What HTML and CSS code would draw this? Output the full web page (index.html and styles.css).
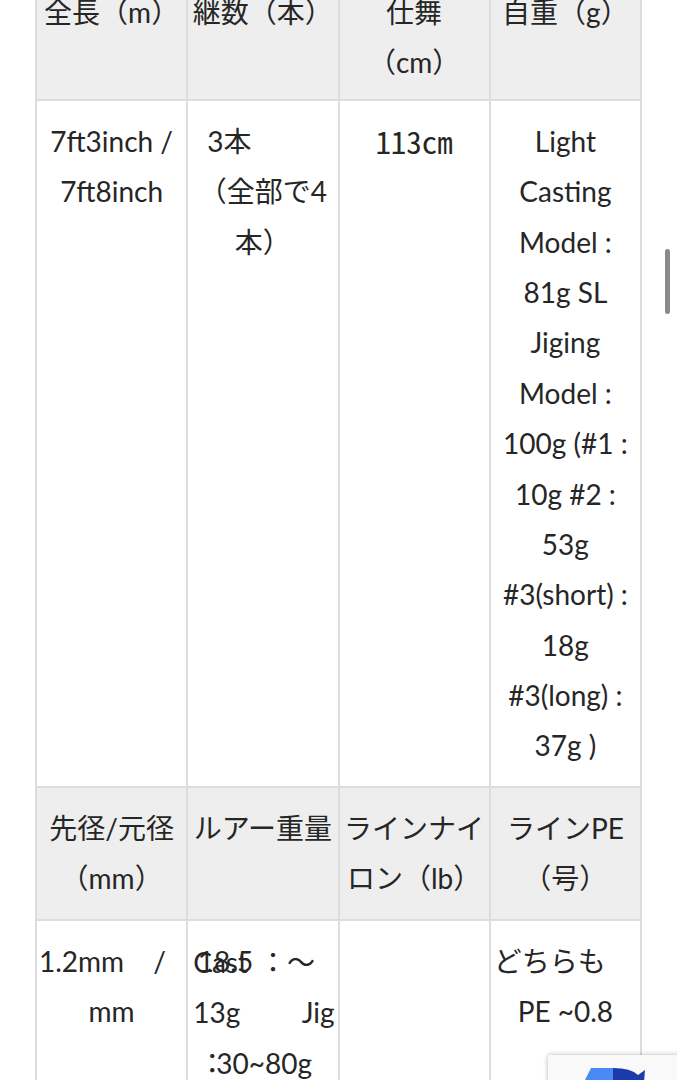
FILE: index.html
```html
<!DOCTYPE html>
<html lang="ja">
<head>
<meta charset="utf-8">
<title>Spec</title>
<link rel="stylesheet" href="styles.css">
</head>
<body>
<main class="page">
  <table class="spec">
    <colgroup><col><col><col><col></colgroup>
    <tr class="head head-top">
      <th>全長（m）</th>
      <th>継数（本）</th>
      <th>仕舞<br>（cm）</th>
      <th>自重（g）</th>
    </tr>
    <tr>
      <td>7ft3inch /<br>7ft8inch</td>
      <td><span class="ln ln-indent">3本</span>（全部で4<br>本）</td>
      <td><span class="mono">113cm</span></td>
      <td>Light<br>Casting<br>Model :<br>81g SL<br>Jiging<br>Model :<br>100g (#1 :<br>10g #2 :<br>53g<br>#3(short) :<br>18g<br>#3(long) :<br>37g )</td>
    </tr>
    <tr class="head">
      <th>先径/元径<br>（mm）</th>
      <th>ルアー重量</th>
      <th><span class="ln">ラインナイ</span><span class="ln">ロン（lb）</span></th>
      <th>ラインPE<br>（号）</th>
    </tr>
    <tr>
      <td>
        <span class="ln ln-over"><span>1.2mm</span><span class="sep">/</span><span class="spill">18.5</span></span>
        <span class="ln">mm</span>
      </td>
      <td>
        <span class="ln ln-left">Cast<span class="colon">：～</span></span>
        <span class="ln ln-just"><span>13g</span><span>Jig</span></span>
        <span class="ln ln-left ln-last"><span class="tight">：</span>30~80g</span>
      </td>
      <td></td>
      <td>
        <span class="ln ln-start">どちらも</span>
        <span class="ln">PE ~0.8</span>
      </td>
    </tr>
  </table>
</main>
<div class="scrollbar"></div>
<div class="badge">
  <svg class="badge-logo" width="80" height="30" viewBox="0 0 80 30">
    <path d="M3 18 L10 4 L32 4 L32 18 Z" fill="#4a8af4"/>
    <path d="M32 4 Q50 4 57 11 L64 6 L63 18 L32 18 Z" fill="#1c3aa9"/>
  </svg>
</div>
</body>
</html>
```

FILE: styles.css
```css
html, body {
  margin: 0;
  padding: 0;
  background: #ffffff;
}

body {
  font-family: "Lato", "Noto Sans CJK JP", sans-serif;
  font-size: 28px;
  line-height: 1.8;
  color: #262626;
  overflow: hidden;
}

.page {
  padding-left: 35px;
  margin-top: -34px;
}

.spec {
  border-collapse: collapse;
  table-layout: fixed;
  width: 607px;
}

.spec th,
.spec td {
  border: 2px solid #dddddd;
  padding: 15px 3px;
  vertical-align: top;
  text-align: center;
  font-weight: normal;
}

.spec .head th {
  background: #eeeeee;
}

.spec .head-top th {
  padding-top: 19px;
  padding-bottom: 11px;
}

.mono {
  font-family: "Noto Sans Mono CJK JP", "DejaVu Sans Mono", monospace;
  font-size: 31px;
  line-height: 50px;
}

.ln {
  display: block;
  white-space: nowrap;
}

.ln-indent {
  text-align: left;
  padding-left: 16px;
}

.ln-over {
  display: flex;
  margin-left: -1px;
}

.ln-over .sep {
  margin-left: 29px;
}

.ln-over .spill {
  margin-left: 32px;
}

.ln-left {
  text-align: left;
  padding-left: 2px;
}

.ln-last {
  padding-left: 7px;
}

.ln-left .colon {
  margin-left: 11px;
  font-family: "Noto Sans CJK JP", sans-serif;
}

.tight {
  font-family: "Noto Sans CJK JP", sans-serif;
  letter-spacing: -10px;
}

.ln-just {
  display: flex;
  justify-content: space-between;
  padding-left: 2px;
}

.ln-start {
  text-align: left;
}

.scrollbar {
  position: fixed;
  left: 665px;
  top: 249px;
  width: 5px;
  height: 65px;
  border-radius: 3px;
  background: #8a8a8a;
}

.badge {
  position: fixed;
  left: 548px;
  top: 1055px;
  width: 256px;
  height: 60px;
  background: #f9f9f9;
  border-radius: 2px;
  box-shadow: 0 0 5px rgba(0, 0, 0, 0.3);
}

.badge-logo {
  position: absolute;
  left: 33px;
  top: 9px;
}
```
